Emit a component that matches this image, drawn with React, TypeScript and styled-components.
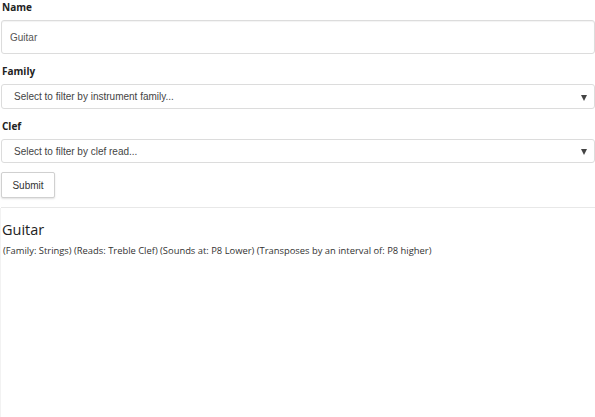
import React from "react";
import styled, { createGlobalStyle } from "styled-components";

const Global = createGlobalStyle`
  html, body { margin: 0; padding: 0; background: #fff; }
  body { font-family: "Open Sans", "Liberation Sans", sans-serif; color: #333; }
  * { box-sizing: border-box; }
`;

const Page = styled.div`
  width: 595px;
  padding-left: 1px;
`;

const Form = styled.form`
  display: flex;
  flex-direction: column;
`;

const Label = styled.label`
  display: block;
  font-family: "Open Sans", sans-serif;
  font-weight: 700;
  font-size: 10px;
  line-height: 14px;
  color: #222;
  padding: 0 0 0 1px;
  margin: 0 0 6px 0;
`;

const Field = styled.div<{ $gap: number }>`
  margin-bottom: ${(p) => p.$gap}px;
`;

const TextInput = styled.input`
  display: block;
  width: 594px;
  height: 34px;
  border: 1px solid #dcdcdc;
  border-radius: 3px;
  box-shadow: inset 0 1px 1px rgba(0, 0, 0, 0.05);
  padding: 0 8px;
  font-family: "Liberation Sans", Arial, sans-serif;
  font-size: 10px;
  color: #555;
  outline: none;
`;

const SelectWrap = styled.div<{ $h: number }>`
  position: relative;
  width: 594px;
  height: ${(p) => p.$h}px;
  &::after {
    content: "";
    position: absolute;
    right: 8px;
    top: 50%;
    margin-top: -2px;
    border-left: 3px solid transparent;
    border-right: 3px solid transparent;
    border-top: 6px solid #444;
  }
`;

const Select = styled.select`
  appearance: none;
  -webkit-appearance: none;
  display: block;
  width: 100%;
  height: 100%;
  border: 1px solid #dcdcdc;
  border-radius: 3px;
  background: #fff;
  padding: 0 12px;
  font-family: "Liberation Sans", Arial, sans-serif;
  font-size: 10px;
  color: #444;
  outline: none;
`;

const Button = styled.button`
  align-self: flex-start;
  width: 54px;
  height: 26px;
  border: 1px solid #d0d0d0;
  border-radius: 2px;
  background: #fff;
  box-shadow: 0 1px 2px rgba(0, 0, 0, 0.12);
  font-family: "Liberation Sans", Arial, sans-serif;
  font-size: 10px;
  color: #333;
  padding: 0;
`;

const Divider = styled.hr`
  border: 0;
  border-top: 1px solid #e8e8e8;
  margin: 9px 0 0 0;
`;

const Result = styled.section`
  border-left: 1px solid #f2f2f2;
  margin-left: -1px;
  padding: 12px 0 0 1px;
  height: 212px;
`;

const Title = styled.h2`
  font-family: "Open Sans", sans-serif;
  font-weight: 400;
  font-size: 14.5px;
  line-height: 20px;
  margin: 0 0 5px 0;
  color: #222;
`;

const Details = styled.p`
  font-family: "Open Sans", sans-serif;
  font-size: 9.4px;
  line-height: 12px;
  margin: 0 0 0 1px;
  color: #333;
`;

export default function App() {
  return (
    <Page>
      <Global />
      <Form onSubmit={(e) => e.preventDefault()}>
        <Field $gap={10}>
          <Label>Name</Label>
          <TextInput defaultValue="Guitar" />
        </Field>
        <Field $gap={10}>
          <Label>Family</Label>
          <SelectWrap $h={25}>
            <Select defaultValue="">
              <option value="">Select to filter by instrument family...</option>
            </Select>
          </SelectWrap>
        </Field>
        <Field $gap={9}>
          <Label>Clef</Label>
          <SelectWrap $h={24}>
            <Select defaultValue="">
              <option value="">Select to filter by clef read...</option>
            </Select>
          </SelectWrap>
        </Field>
        <Button type="submit">Submit</Button>
      </Form>
      <Divider />
      <Result>
        <Title>Guitar</Title>
        <Details>
          (Family: Strings) (Reads: Treble Clef) (Sounds at: P8 Lower) (Transposes by an interval of: P8 higher)
        </Details>
      </Result>
    </Page>
  );
}
